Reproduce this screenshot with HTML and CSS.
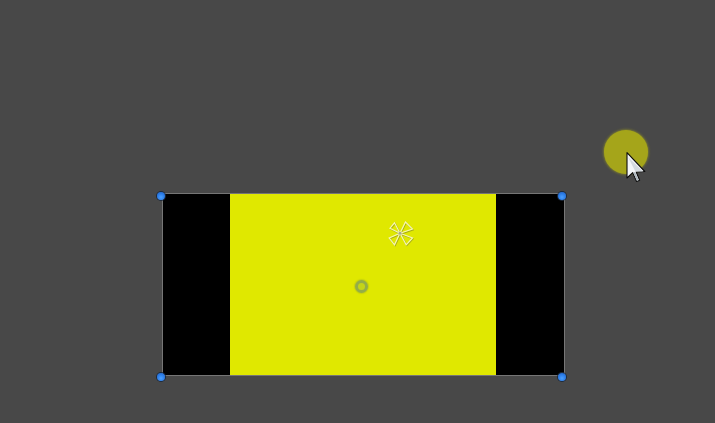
FILE: index.html
```html
<!DOCTYPE html>
<html lang="en">
<head>
<meta charset="utf-8">
<title>Canvas</title>
<link rel="stylesheet" href="styles.css">
</head>
<body>
<main class="canvas">
  <div class="frame">
    <div class="fill"></div>
    <svg class="star" viewBox="0 0 26 26" width="26" height="26">
      <g fill="none" stroke="#9aa01a" stroke-width="1.2" opacity="0.8" transform="translate(0.7 0.8)">
        <path d="M12 12.3 L2 7.2 L6.5 1.8 Z"/>
        <path d="M12 12.3 L17.5 1 L24.5 8 Z"/>
        <path d="M12 12.3 L1.2 17 L6.5 23.8 Z"/>
        <path d="M12 12.3 L24.5 17 L18.2 23.8 Z"/>
      </g>
      <g fill="none" stroke="#f6f6b4" stroke-width="1.2">
        <path d="M12 12.3 L2 7.2 L6.5 1.8 Z"/>
        <path d="M12 12.3 L17.5 1 L24.5 8 Z"/>
        <path d="M12 12.3 L1.2 17 L6.5 23.8 Z"/>
        <path d="M12 12.3 L24.5 17 L18.2 23.8 Z"/>
      </g>
      <circle cx="12" cy="12.3" r="1.5" fill="#a8a890"/>
    </svg>
    <div class="ring"></div>
  </div>
  <span class="handle h-tl"></span>
  <span class="handle h-tr"></span>
  <span class="handle h-bl"></span>
  <span class="handle h-br"></span>
  <div class="halo"></div>
  <svg class="cursor" viewBox="0 0 20 31" width="20" height="31">
    <path d="M1 0.7 L1 26 L6.7 20.6 L10.6 29.5 L13.6 28.2 L10.2 20 L18.8 19.5 Z" fill="#f4f6f8" stroke="#0d0d0d" stroke-width="1.1" stroke-linejoin="round"/>
    <path d="M9.4 19.5 L17 19.5 L2 5 Z" fill="#d4dadf"/>
    <path d="M9 20 L12.8 28 L10.9 28.8 L7.3 20.4 Z" fill="#aeb8bf"/>
  </svg>
</main>
</body>
</html>
```
FILE: styles.css
```css
html, body {
  margin: 0;
  padding: 0;
  background: #484848;
}
.canvas {
  position: relative;
  width: 715px;
  height: 423px;
  overflow: hidden;
  background: #484848;
}
.frame {
  position: absolute;
  left: 162px;
  top: 193px;
  width: 401px;
  height: 181px;
  border: 1px solid #767676;
  background: #000;
}
.fill {
  position: absolute;
  left: 67px;
  top: 0;
  width: 266px;
  height: 100%;
  background: #e0e800;
}
.star {
  position: absolute;
  left: 225px;
  top: 27px;
}
.ring {
  position: absolute;
  left: 192px;
  top: 86px;
  width: 13px;
  height: 13px;
  box-sizing: border-box;
  border-radius: 50%;
  border: 3px solid #93ad48;
  background: #c4d418;
  box-shadow: 0 0 1px 1px rgba(150, 165, 40, 0.35);
}
.handle {
  position: absolute;
  width: 8px;
  height: 8px;
  border-radius: 50%;
  background: radial-gradient(circle at 50% 65%, #4aa0ff 0, #2b7be6 55%, #1a5cc0 100%);
  box-shadow: 0 0 0 1px #1c2a3c;
}
.h-tl { left: 157px; top: 192px; }
.h-tr { left: 558px; top: 192px; }
.h-bl { left: 157px; top: 373px; }
.h-br { left: 558px; top: 373px; }
.halo {
  position: absolute;
  left: 604px;
  top: 130px;
  width: 44px;
  height: 44px;
  border-radius: 50%;
  background: #a5a51a;
  box-shadow: 0 0 3px #a5a51a;
}
.cursor {
  position: absolute;
  left: 626px;
  top: 152px;
}
```
